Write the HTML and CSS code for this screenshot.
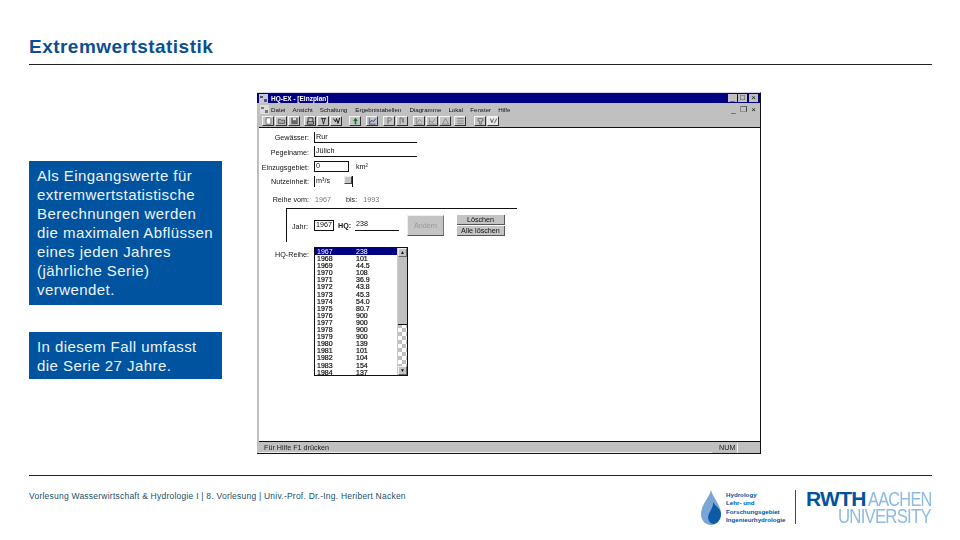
FILE: index.html
```html
<!DOCTYPE html>
<html lang="de">
<head>
<meta charset="utf-8">
<title>Extremwertstatistik</title>
<link rel="stylesheet" href="styles.css">
</head>
<body>
<div class="slide">
  <header class="head"><h1>Extremwertstatistik</h1></header>
  <main class="main">
    <aside class="notes">
      <p class="note note-a">Als Eingangswerte für<br>extremwertstatistische<br>Berechnungen werden<br>die maximalen Abflüssen<br>eines jeden Jahres<br>(jährliche Serie)<br>verwendet.</p>
      <p class="note note-b">In diesem Fall umfasst<br>die Serie 27 Jahre.</p>
    </aside>
    <section class="win">
      <div class="titlebar">
        <svg class="appicon" viewBox="0 0 9 9"><rect width="9" height="9" fill="#c8c8e0"/><path d="M1 2h3v2H1zM5 5h3v3H5z" fill="#555"/></svg>
        <span class="title-text">HQ-EX - [Einzplan]</span>
        <span class="winbtns"><i class="wb">_</i><i class="wb">□</i><i class="wb wb-x">×</i></span>
      </div>
      <div class="menubar">
        <svg class="appicon" viewBox="0 0 9 9"><rect width="9" height="9" fill="#ddd"/><path d="M1 2h3v2H1zM5 5h3v3H5z" fill="#777"/></svg>
        <span class="m m1">Datei</span><span class="m m2">Ansicht</span><span class="m m3">Schaltung</span><span class="m m4">Ergebnistabellen</span><span class="m m5">Diagramme</span><span class="m m6">Lokal</span><span class="m m7">Fenster</span><span class="m m8">Hilfe</span>
        <span class="winbtns"><i class="wb wb-flat">_</i><i class="wb wb-flat">❐</i><i class="wb wb-flat">×</i></span>
      </div>
      <div class="toolbar">
        <div class="tgroup">
          <span class="tb"><svg viewBox="0 0 10 10"><path d="M2 1h5l1 1v7H2z" fill="#fff" stroke="#333" stroke-width=".8"/></svg></span>
          <span class="tb"><svg viewBox="0 0 10 10"><path d="M1 8V3h3l1 1h4v4z" fill="#aaa" stroke="#333" stroke-width=".8"/></svg></span>
          <span class="tb"><svg viewBox="0 0 10 10"><path d="M1 1h8v8H1z" fill="#666"/><path d="M3 1h4v3H3z" fill="#ddd"/></svg></span>
        </div>
        <div class="tgroup g2">
          <span class="tb"><svg viewBox="0 0 10 10"><path d="M2 6V1h6v5M1 6h8v3H1z" fill="none" stroke="#111" stroke-width="1"/></svg></span>
          <span class="tb"><svg viewBox="0 0 10 10"><path d="M3 1l2 8M7 1L5 9M2 2h6" fill="none" stroke="#111" stroke-width="1"/></svg></span>
          <span class="tb"><svg viewBox="0 0 10 10"><path d="M1 2l3 4 1-4 2 6 2-7" fill="none" stroke="#111" stroke-width="1.2"/></svg></span>
        </div>
        <div class="tgroup g3">
          <span class="tb"><svg viewBox="0 0 10 10"><path d="M5 1l3 4H6v4H4V5H2z" fill="#0a7a1a"/></svg></span>
        </div>
        <div class="tgroup g4">
          <span class="tb"><svg viewBox="0 0 10 10"><path d="M1 1v8h8" fill="none" stroke="#223" stroke-width=".8"/><path d="M2 7l2-3 2 2 3-4" fill="none" stroke="#1a3fb0" stroke-width="1.2"/></svg></span>
        </div>
        <div class="tgroup g4">
          <span class="tb"><svg viewBox="0 0 10 10"><path d="M3 9V1h3l1 1v2L6 5H3" fill="none" stroke="#666" stroke-width="1"/></svg></span>
          <span class="tb"><svg viewBox="0 0 10 10"><path d="M2 9V1h2l2 6V1" fill="none" stroke="#666" stroke-width="1"/></svg></span>
        </div>
        <div class="tgroup g4">
          <span class="tb"><svg viewBox="0 0 10 10"><path d="M1 1v8h8M2 7l3-4 3 3" fill="none" stroke="#777" stroke-width=".9"/></svg></span>
          <span class="tb"><svg viewBox="0 0 10 10"><path d="M1 1v8h8M2 5l3 2 3-5" fill="none" stroke="#777" stroke-width=".9"/></svg></span>
          <span class="tb"><svg viewBox="0 0 10 10"><path d="M1 9h8L5 2z" fill="none" stroke="#777" stroke-width=".9"/></svg></span>
        </div>
        <div class="tgroup g5">
          <span class="tb"><svg viewBox="0 0 10 10"><path d="M1 2h8M1 5h8M1 8h8" fill="none" stroke="#777"/></svg></span>
        </div>
        <div class="tgroup g6">
          <span class="tb"><svg viewBox="0 0 10 10"><path d="M2 2h6v3H6v4H4V5H2z" fill="none" stroke="#666"/></svg></span>
          <span class="tb tb-light"><svg viewBox="0 0 10 10"><path d="M1 2l2 5 2-5M6 8l3-6" fill="none" stroke="#444"/></svg></span>
        </div>
      </div>
      <div class="client">
        <div class="frow r1"><label class="lab">Gewässer:</label><span class="field f-wide">Rur</span></div>
        <div class="frow r2"><label class="lab">Pegelname:</label><span class="field f-wide">Jülich</span></div>
        <div class="frow r3"><label class="lab">Einzugsgebiet:</label><span class="field f-box">0</span><span class="unit">km²</span></div>
        <div class="frow r4"><label class="lab">Nutzeinheit:</label><span class="field f-sel">m³/s<i class="dd"></i></span></div>
        <div class="frow r5"><label class="lab">Reihe vom:</label><span class="ro ro1">1967</span><span class="lab-s">bis:</span><span class="ro">1993</span></div>
        <div class="group">
          <span class="glab">Jahr:</span><span class="field f-year">1967</span><span class="hq">HQ:</span><span class="field f-hq">238</span>
          <span class="btn btn-off">Ändern</span>
          <span class="btnstack"><span class="btn2">Löschen</span><span class="btn2">Alle löschen</span></span>
        </div>
        <div class="frow r6">
          <label class="lab">HQ-Reihe:</label>
          <div class="list">
            <ul class="rows">
              <li class="sel"><b>1967</b><b>238</b></li>
              <li><b>1968</b><b>101</b></li>
              <li><b>1969</b><b>44.5</b></li>
              <li><b>1970</b><b>108</b></li>
              <li><b>1971</b><b>36.9</b></li>
              <li><b>1972</b><b>43.8</b></li>
              <li><b>1973</b><b>45.3</b></li>
              <li><b>1974</b><b>54.0</b></li>
              <li><b>1975</b><b>80.7</b></li>
              <li><b>1976</b><b>900</b></li>
              <li><b>1977</b><b>900</b></li>
              <li><b>1978</b><b>900</b></li>
              <li><b>1979</b><b>900</b></li>
              <li><b>1980</b><b>139</b></li>
              <li><b>1981</b><b>101</b></li>
              <li><b>1982</b><b>104</b></li>
              <li><b>1983</b><b>154</b></li>
              <li class="last"><b>1984</b><b>137</b></li>
            </ul>
            <div class="sbar">
              <span class="sarrow">▲</span>
              <span class="sthumb"></span>
              <span class="strack"></span>
              <span class="sarrow">▼</span>
            </div>
          </div>
        </div>
      </div>
      <div class="status"><span class="st-main">Für Hilfe F1 drücken</span><span class="st-num">NUM</span><span class="st-end"></span></div>
    </section>
  </main>
  <footer class="foot">
    <p class="foot-text">Vorlesung Wasserwirtschaft &amp; Hydrologie I | 8. Vorlesung | Univ.-Prof. Dr.-Ing. Heribert Nacken</p>
    <div class="logos">
      <svg class="drop" viewBox="0 0 22 36"><path d="M11 0C9 8 1 15 1 24c0 7 5 11 10 11s10-4 10-11C21 15 13 8 11 0z" fill="#7aa6d6"/><path d="M13 12c1 6-5 10-5 16 1 4 3 6 6 6 4-1 7-5 7-10 0-5-5-7-8-12z" fill="#0d5aa5"/></svg>
      <div class="hyd"><span>Hydrology</span><span>Lehr- und</span><span>Forschungsgebiet</span><span>Ingenieurhydrologie</span></div>
      <span class="vr"></span>
      <div class="rwth">
        <div class="rw1"><b>RWTH</b><span class="aachen">AACHEN</span></div>
        <div class="rw2"><span class="univ">UNIVERSITY</span></div>
      </div>
    </div>
  </footer>
</div>
</body>
</html>
```
FILE: styles.css
```css
* { box-sizing: border-box; }
html, body { margin: 0; padding: 0; background: #fff; }
body { font-family: "Liberation Sans", Arial, sans-serif; color: #000; }
.slide { width: 960px; height: 540px; overflow: hidden; display: flex; flex-direction: column; padding: 0 28px 0 29px; }

.head { height: 65px; border-bottom: 1px solid #222; padding-top: 36px; }
.head h1 { margin: 0; font-size: 19px; line-height: 21px; font-weight: 700; color: #0b4f8f; letter-spacing: .47px; white-space: nowrap; }

.main { height: 410px; display: flex; padding-top: 27px; }
.notes { width: 193px; padding-top: 69px; flex: none; }
.note { margin: 0; background: #00549f; color: #eef3f9; font-size: 15px; line-height: 19px; padding: 5px 0 0 8px; letter-spacing: .44px; white-space: nowrap; }
.note-a { height: 144px; }
.note-b { height: 47px; margin-top: 27px; }

.win { margin-left: 35px; width: 504px; height: 362px; background: #c0c0c0; border-top: 1px solid #d8d8e8; border-right: 1px solid #111; border-bottom: 1px solid #111; padding-left: 2px; display: flex; flex-direction: column; filter: blur(.35px); font-size: 7.2px; }
.titlebar { height: 10px; flex: none; background: #000080; color: #fff; display: flex; align-items: center; font-weight: 700; font-size: 6.5px; margin-left: -2px; }
.appicon { width: 9px; height: 9px; margin-left: 2px; flex: none; }
.title-text { margin-left: 3px; }
.winbtns { margin-left: auto; display: flex; gap: 1px; padding-right: 2px; }
.wb { display: block; width: 9px; height: 8px; background: #c0c0c0; color: #111; font-style: normal; font-size: 8px; line-height: 8px; text-align: center; font-weight: 400; overflow: hidden; }
.wb-x { margin-left: 1px; }
.wb-flat { background: transparent; }
.menubar { height: 13px; flex: none; display: flex; align-items: center; color: #111; font-size: 6.2px; }
.menubar .appicon { margin-left: 1px; }
.m { white-space: nowrap; }
.m1 { margin-left: 2px; }
.m2 { margin-left: 7px; }
.m3 { margin-left: 7px; }
.m4 { margin-left: 8px; }
.m5 { margin-left: 8px; }
.m6 { margin-left: 7px; }
.m7 { margin-left: 7px; }
.m8 { margin-left: 7px; }

.toolbar { height: 12px; flex: none; display: flex; padding-left: 3px; gap: 4px; border-bottom: 1px solid #111; align-items: flex-start; }
.tgroup { display: flex; gap: 1px; }
.g3 { margin-left: 3px; }
.g4 { margin-left: 1px; }
.g5 { margin-left: -1px; }
.g6 { margin-left: 4px; }
.tb { width: 12px; height: 10px; background: #c4c4c4; border: 1px solid; border-color: #f4f4f4 #333 #333 #f4f4f4; display: flex; align-items: center; justify-content: center; }
.tb svg { width: 9px; height: 8px; display: block; }
.tb-light { background: #e8e8e8; }

.client { flex: 1; background: #fff; color: #111; display: flex; flex-direction: column; font-size: 7.2px; min-height: 0; }
.frow { display: flex; align-items: center; }
.lab { width: 50px; text-align: right; white-space: nowrap; flex: none; margin-right: 5px; padding-top: 1px; }
.field { display: block; border-left: 1px solid #111; border-bottom: 1px solid #111; padding-left: 1px; line-height: 10px; font-size: 7.2px; }
.f-wide { width: 103px; height: 11px; }
.r1 { margin-top: 3px; height: 12px; }
.r2 { margin-top: 3px; height: 11px; }
.r3 { margin-top: 4px; height: 11px; }
.f-box { width: 35px; height: 11px; border-top: 1px solid #111; border-right: 1px solid #111; line-height: 8px; }
.unit { margin-left: 7px; }
.r4 { margin-top: 3px; height: 12px; }
.f-sel { width: 39px; height: 11px; border-bottom: 0; border-right: 1px solid #111; display: flex; justify-content: space-between; }
.dd { width: 8px; height: 8px; background: #c4c4c4; border: 1px solid; border-color: #eee #444 #444 #eee; margin-right: 0; }
.r5 { margin-top: 6px; height: 12px; color: #222; }
.ro { color: #777; }
.ro1 { margin-left: 1px; }
.lab-s { margin-left: 15px; margin-right: 6px; }

.group { margin-left: 27px; margin-top: 3px; width: 231px; height: 34px; flex: none; border-top: 1px solid #111; border-left: 1px solid #111; display: flex; align-items: center; padding-left: 5px; }
.glab { width: 15px; text-align: right; margin-top: 2px; }
.f-year { margin-left: 7px; width: 20px; height: 11px; border: 1px solid #111; line-height: 8px; }
.hq { margin-left: 4px; font-weight: 700; width: 15px; }
.f-hq { margin-left: 2px; width: 44px; height: 11px; border-left: 0; line-height: 8px; }
.btn { margin-left: 8px; width: 37px; height: 21px; background: #c4c4c4; color: #999; font-size: 7.2px; display: flex; align-items: center; justify-content: center; border: 1px solid; border-color: #eee #777 #555 #eee; }
.btnstack { margin-left: 13px; width: 48px; display: flex; flex-direction: column; gap: 1px; height: 21px; }
.btn2 { flex: 1; background: #c4c4c4; color: #111; text-align: center; line-height: 9px; font-size: 7.2px; border-bottom: 1px solid #555; border-right: 1px solid #555; }

.r6 { margin-top: 5px; align-items: flex-start; }
.r6 .lab { margin-top: 2px; }
.list { width: 94px; height: 129px; border: 1px solid #111; display: flex; flex: none; background: #fff; }
.rows { list-style: none; margin: 0; padding: 0; flex: 1; overflow: hidden; }
.rows li { height: 7.1px; line-height: 7.1px; font-size: 7px; display: flex; }
.rows li b { font-weight: 400; -webkit-text-stroke: .2px #111; }
.rows li b:first-child { width: 41px; padding-left: 2px; }
.rows li.sel { background: #000080; color: #fff; }
.rows li.sel b { -webkit-text-stroke: 0; }
.sbar { width: 10px; flex: none; display: flex; flex-direction: column; background: repeating-conic-gradient(#c0c0c0 0 25%, #fff 0 50%) 0 0 / 8px 8px; border-left: 1px solid #ccc; }
.sarrow { height: 9px; flex: none; background: #c4c4c4; font-size: 5px; line-height: 7px; text-align: center; color: #111; border: 1px solid; border-color: #eee #666 #666 #eee; }
.sthumb { height: 68px; flex: none; background: #c0c0c0; border-bottom: 1px solid #111; }
.strack { flex: 1; }

.status { height: 12px; flex: none; border-top: 1px solid #111; display: flex; align-items: center; font-size: 7.2px; color: #222; }
.st-main { width: 453px; padding-left: 5px; border-bottom: 1px solid #eee; height: 10px; line-height: 9px; }
.st-num { width: 19px; margin-left: 7px; border-right: 1px solid #eee; height: 10px; line-height: 9px; }
.st-end { flex: 1; }

.foot { height: 65px; border-top: 1px solid #222; display: flex; }
.foot-text { margin: 15px 0 0; font-size: 8.5px; line-height: 11px; color: #1a4f6c; letter-spacing: .23px; white-space: nowrap; flex: none; }
.logos { margin-left: auto; display: flex; align-items: flex-start; padding-top: 14px; }
.drop { width: 22px; height: 36px; flex: none; }
.hyd { margin-left: 4px; display: flex; flex-direction: column; color: #00549f; font-size: 6.2px; font-weight: 700; line-height: 8.4px; margin-top: 1px; white-space: nowrap; width: 69px; }
.vr { width: 1px; height: 34px; background: #1f4f80; flex: none; }
.rwth { margin-left: 10px; font-size: 21px; line-height: 17px; width: 126px; color: #8ebae5; letter-spacing: -1px; display: flex; flex-direction: column; }
.rw1 { display: flex; height: 17px; white-space: nowrap; }
.rw1 b { color: #00549f; letter-spacing: -.7px; }
.aachen { display: inline-block; margin-left: 2px; transform: scaleX(.78); transform-origin: left center; }
.rw2 { height: 17px; white-space: nowrap; }
.univ { display: inline-block; margin-left: 32px; transform: scaleX(.8); transform-origin: left center; }
```
